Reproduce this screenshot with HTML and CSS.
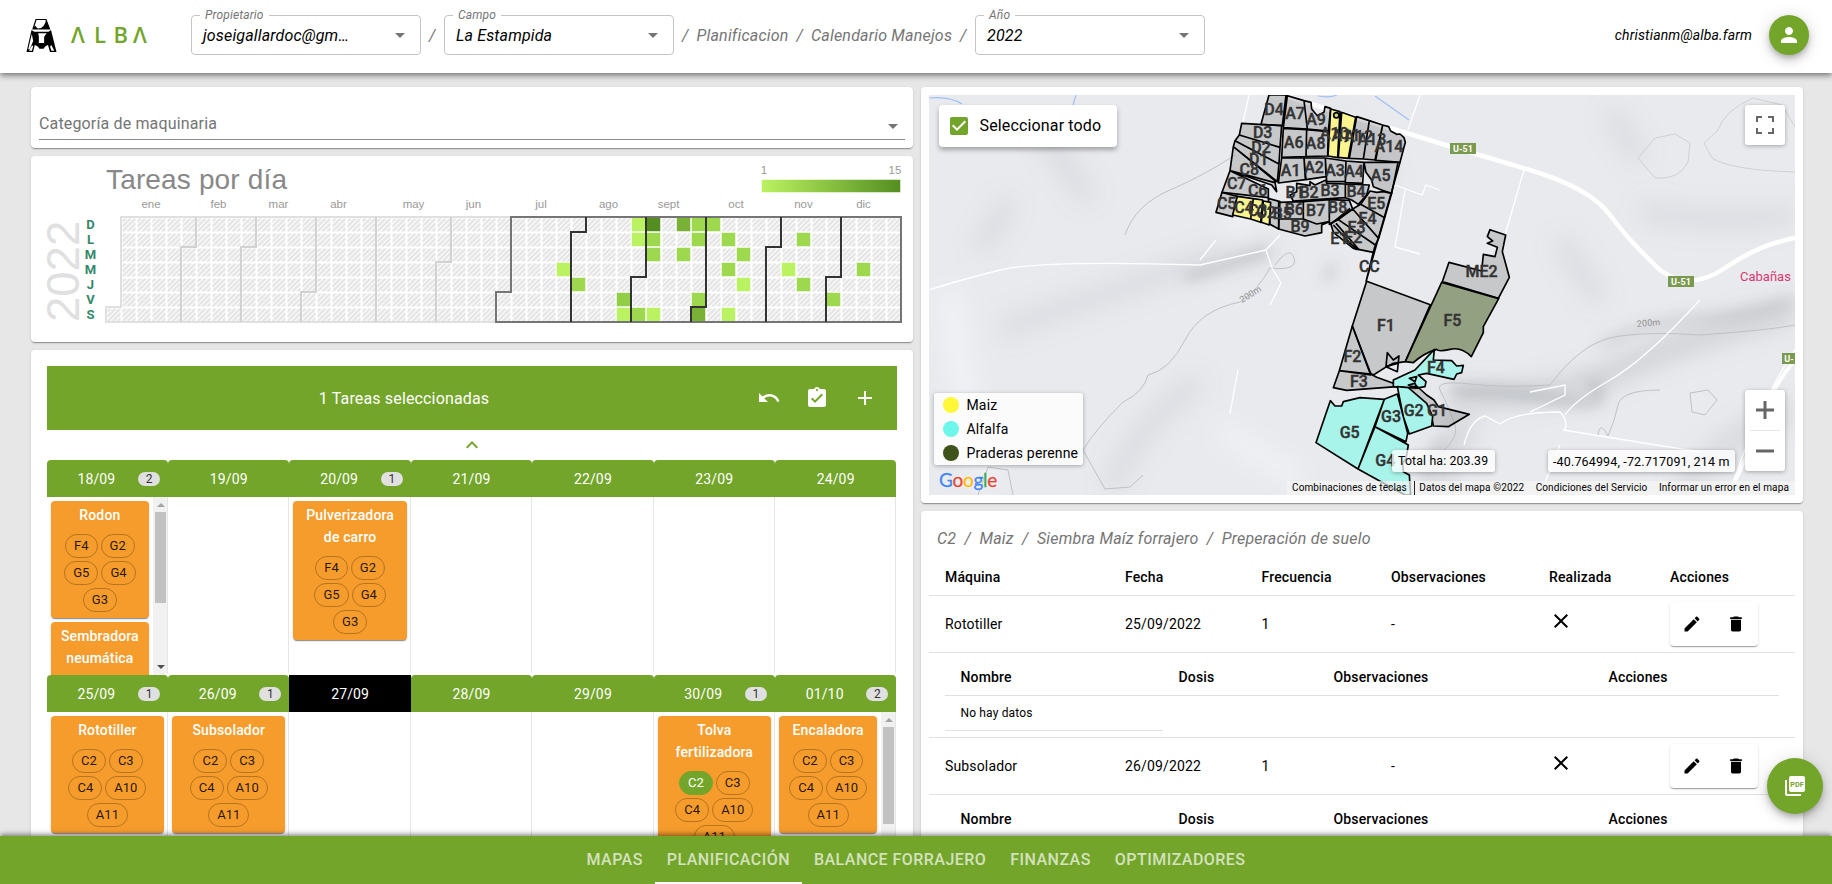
FILE: index.html
```html
<!DOCTYPE html>
<html lang="es">
<head>
<meta charset="utf-8">
<title>Alba - Calendario Manejos</title>
<link rel="stylesheet" href="styles.css">
</head>
<body>
<svg class="defs" aria-hidden="true">
  <symbol id="i-drop" viewBox="0 0 24 24"><path d="M7 10l5 5 5-5z"/></symbol>
  <symbol id="i-edit" viewBox="0 0 24 24"><path d="M3 17.25V21h3.75L17.81 9.94l-3.75-3.75L3 17.25zM20.71 7.04c.39-.39.39-1.02 0-1.41l-2.34-2.34c-.39-.39-1.02-.39-1.41 0l-1.83 1.83 3.75 3.75 1.83-1.83z"/></symbol>
  <symbol id="i-delete" viewBox="0 0 24 24"><path d="M6 19c0 1.1.9 2 2 2h8c1.1 0 2-.9 2-2V7H6v12zM19 4h-3.5l-1-1h-5l-1 1H5v2h14V4z"/></symbol>
  <symbol id="i-close" viewBox="0 0 24 24"><path d="M19 6.41L17.59 5 12 10.59 6.41 5 5 6.41 10.59 12 5 17.59 6.41 19 12 13.41 17.59 19 19 17.59 13.41 12z"/></symbol>
</svg>

<header class="appbar">
  <svg class="logo" width="130" height="40" viewBox="0 0 130 40">
    <path d="M11 4.500h10l3.500 9.500H8z" fill="#fff" stroke="#000" stroke-width="1.200"/>
    <path d="M21 5l3.500 9H13q7-1.500 8-9zM8 14l2-3.500 3 3.500z" fill="#000"/>
    <path d="M6.500 15L1.500 37H8l1.800-7 3.200 1.500V22l-3.500-5zM26 15l5.500 22H25l-2-7-3.200 1.500V22l3.500-5z" fill="#000"/>
    <path d="M6.800 19L3.200 34.500l1.600-.5L8.200 26zM26.300 30l3 5.800h-2.800l-1.500-4zM7 30.500l1.200.6-1.300 4.600H4z" fill="#fff"/>
    <path d="M10 17.500h13l-3.200 4.500v9l-1.600 2h-3.400l-1.600-2v-9z" fill="#fff" stroke="#000" stroke-width="1.300"/>
    <path d="M13.500 28h6v3l-1.500 2h-3l-1.500-2zM10 17.500h3l1 5z" fill="#000"/>
    <text class="logo-text" y="28" x="46 69 88.500 108">ΛLBΛ</text>
  </svg>
  <div class="crumbs">
    <div class="select"><span class="select-label">Propietario</span><span class="select-value">joseigallardoc@gm…</span><svg class="ic drop"><use href="#i-drop"/></svg></div>
    <span class="sep">/</span>
    <div class="select"><span class="select-label">Campo</span><span class="select-value">La Estampida</span><svg class="ic drop"><use href="#i-drop"/></svg></div>
    <span class="sep">/</span><span>Planificacion</span><span class="sep">/</span><span>Calendario Manejos</span><span class="sep">/</span>
    <div class="select"><span class="select-label">Año</span><span class="select-value">2022</span><svg class="ic drop"><use href="#i-drop"/></svg></div>
  </div>
  <div class="user">christianm@alba.farm</div>
  <div class="avatar"><svg class="ic" viewBox="0 0 24 24"><path d="M12 12c2.210 0 4-1.790 4-4s-1.790-4-4-4-4 1.790-4 4 1.790 4 4 4zm0 2c-2.670 0-8 1.340-8 4v2h16v-2c0-2.660-5.330-4-8-4z"/></svg></div>
</header>

<main class="page">
  <section class="column">
    <div class="card category">
      <div class="field"><span>Categoría de maquinaria</span><svg class="ic drop"><use href="#i-drop"/></svg></div>
    </div>

    <div class="card heat">
      <svg width="882" height="186" viewBox="31 156 882 186">
        <defs>
          <pattern id="hatch" x="106.500" y="217.500" width="15" height="15" patternUnits="userSpaceOnUse">
            <rect width="15" height="15" fill="#f8f8f8"/>
            <path d="M0 5L5 0M0 10L10 0M0 15L15 0M5 15L15 5M10 15L15 10" stroke="#dadada" stroke-width="1.300"/>
            <path d="M0 0H15V15H0Z" fill="none" stroke="#fff" stroke-width="2"/>
          </pattern>
          <linearGradient id="scale"><stop offset="0" stop-color="#bbf261"/><stop offset="1" stop-color="#548e20"/></linearGradient>
        </defs>
        <text class="heat-title" x="106" y="189" textLength="181">Tareas por día</text>
        <text class="heat-year" transform="translate(78.500 322) rotate(-90)">2022</text>
        <g class="heat-text" text-anchor="middle">
          <text x="764" y="174">1</text><text x="895" y="174">15</text>
          <text x="151" y="208">ene</text><text x="218.500" y="208">feb</text><text x="278.500" y="208">mar</text><text x="338.500" y="208">abr</text><text x="413.500" y="208">may</text><text x="473.500" y="208">jun</text><text x="541" y="208">jul</text><text x="608.500" y="208">ago</text><text x="668.500" y="208">sept</text><text x="736" y="208">oct</text><text x="803.500" y="208">nov</text><text x="863.500" y="208">dic</text>
        </g>
        <g class="heat-days" text-anchor="middle">
          <text x="90.500" y="229">D</text><text x="90.500" y="244">L</text><text x="90.500" y="259">M</text><text x="90.500" y="274">M</text><text x="90.500" y="289">J</text><text x="90.500" y="304">V</text><text x="90.500" y="319">S</text>
        </g>
        <rect x="761.500" y="179.500" width="139" height="13" fill="url(#scale)" stroke="#fff" stroke-opacity=".5"/>
        <path d="M121 217H901V322H106V307H121Z" fill="url(#hatch)"/>
        <g class="cells" transform="translate(106.500 217.500)">
          <g fill="#bbf261">
            <rect x="450" y="45" width="14" height="14"/><rect x="510" y="90" width="14" height="14"/><rect x="525" y="0" width="14" height="14"/><rect x="525" y="15" width="14" height="14"/><rect x="540" y="90" width="14" height="14"/><rect x="615" y="90" width="14" height="14"/><rect x="630" y="60" width="14" height="14"/><rect x="675" y="45" width="14" height="14"/>
          </g>
          <g fill="#9dd84f">
            <rect x="465" y="60" width="14" height="14"/><rect x="510" y="75" width="14" height="14" fill="#92cd48"/><rect x="525" y="90" width="14" height="14"/><rect x="540" y="15" width="14" height="14"/><rect x="540" y="30" width="14" height="14"/><rect x="570" y="30" width="14" height="14"/><rect x="585" y="0" width="14" height="14"/><rect x="585" y="15" width="14" height="14"/><rect x="585" y="75" width="14" height="14"/><rect x="600" y="0" width="14" height="14"/><rect x="615" y="15" width="14" height="14"/><rect x="615" y="45" width="14" height="14"/><rect x="630" y="30" width="14" height="14"/><rect x="690" y="15" width="14" height="14"/><rect x="690" y="60" width="14" height="14"/><rect x="720" y="75" width="14" height="14"/><rect x="750" y="45" width="14" height="14"/>
          </g>
          <rect x="540" y="0" width="14" height="14" fill="#548e20"/><rect x="570" y="0" width="14" height="14" fill="#78b136"/><rect x="585" y="90" width="14" height="14" fill="#78b136"/>
        </g>
        <g fill="none" stroke-width="2">
          <path stroke="#e0e0e0" d="M511 217H121V307H106V322H496"/>
          <path stroke="#d2d2d2" d="M196 217V247H181V322M256 217V247H241V322M316 217V292H301V322M376 217V322M451 217V262H436V322"/>
          <path stroke="#757575" d="M496 322V292H511V217H901V322H495"/>
          <path stroke="#333" d="M586 217V232H571V322M646 217V277H631V322M706 217V307H691V322M781 217V247H766V322M841 217V277H826V322"/>
        </g>
      </svg>
    </div>

    <div class="card planner">
      <div class="toolbar">
        <span class="toolbar-title">1 Tareas seleccionadas</span>
        <div class="tools">
          <svg class="ic" viewBox="0 0 24 24"><path d="M12.500 8c-2.650 0-5.050.99-6.900 2.600L2 7v9h9l-3.620-3.620c1.390-1.160 3.160-1.880 5.120-1.880 3.540 0 6.550 2.310 7.600 5.500l2.370-.78C21.080 11.030 17.150 8 12.500 8z"/></svg>
          <svg class="ic" viewBox="0 0 24 24"><path d="M19 3h-4.180C14.400 1.840 13.300 1 12 1c-1.300 0-2.400.84-2.820 2H5c-1.100 0-2 .9-2 2v14c0 1.100.9 2 2 2h14c1.100 0 2-.9 2-2V5c0-1.100-.9-2-2-2zm-7 0c.55 0 1 .45 1 1s-.45 1-1 1-1-.45-1-1 .45-1 1-1zm-2 14l-4-4 1.410-1.410L10 14.170l6.590-6.590L18 9l-8 8z"/></svg>
          <svg class="ic" viewBox="0 0 24 24"><path d="M19 13h-6v6h-2v-6H5v-2h6V5h2v6h6v2z"/></svg>
        </div>
      </div>
      <div class="collapse"><svg class="ic" viewBox="0 0 24 24"><path d="M12 8l-6 6 1.410 1.410L12 10.830l4.590 4.580L18 14z"/></svg></div>

      <div class="week">
        <div class="day"><div class="day-head"><span>18/09</span><b class="badge">2</b></div>
          <div class="day-body"><div class="tasks">
            <div class="task"><h4>Rodon</h4><div class="chips"><i>F4</i><i>G2</i><i>G5</i><i>G4</i><i>G3</i></div></div>
            <div class="task tall"><h4>Sembradora neumática</h4></div>
          </div><div class="scroll"><s class="up"></s><s class="thumb"></s><s class="down"></s></div></div></div>
        <div class="day"><div class="day-head"><span>19/09</span></div></div>
        <div class="day"><div class="day-head"><span>20/09</span><b class="badge">1</b></div>
          <div class="day-body"><div class="tasks"><div class="task"><h4>Pulverizadora de carro</h4><div class="chips"><i>F4</i><i>G2</i><i>G5</i><i>G4</i><i>G3</i></div></div></div></div></div>
        <div class="day"><div class="day-head"><span>21/09</span></div></div>
        <div class="day"><div class="day-head"><span>22/09</span></div></div>
        <div class="day"><div class="day-head"><span>23/09</span></div></div>
        <div class="day"><div class="day-head"><span>24/09</span></div></div>
      </div>
      <div class="week">
        <div class="day"><div class="day-head"><span>25/09</span><b class="badge">1</b></div>
          <div class="day-body"><div class="tasks"><div class="task"><h4>Rototiller</h4><div class="chips"><i>C2</i><i>C3</i><i>C4</i><i>A10</i><i>A11</i></div></div></div></div></div>
        <div class="day"><div class="day-head"><span>26/09</span><b class="badge">1</b></div>
          <div class="day-body"><div class="tasks"><div class="task"><h4>Subsolador</h4><div class="chips"><i>C2</i><i>C3</i><i>C4</i><i>A10</i><i>A11</i></div></div></div></div></div>
        <div class="day today"><div class="day-head"><span>27/09</span></div></div>
        <div class="day"><div class="day-head"><span>28/09</span></div></div>
        <div class="day"><div class="day-head"><span>29/09</span></div></div>
        <div class="day"><div class="day-head"><span>30/09</span><b class="badge">1</b></div>
          <div class="day-body"><div class="tasks"><div class="task"><h4>Tolva fertilizadora</h4><div class="chips"><i class="on">C2</i><i>C3</i><i>C4</i><i>A10</i><i>A11</i></div></div></div></div></div>
        <div class="day"><div class="day-head"><span>01/10</span><b class="badge">2</b></div>
          <div class="day-body"><div class="tasks">
            <div class="task"><h4>Encaladora</h4><div class="chips"><i>C2</i><i>C3</i><i>C4</i><i>A10</i><i>A11</i></div></div>
          </div><div class="scroll"><s class="up"></s><s class="thumb long"></s><s class="down"></s></div></div></div>
      </div>
    </div>
  </section>

  <section class="column">
    <div class="card map-card"><div class="map">
      <svg class="map-canvas" width="866" height="400" viewBox="929 95 866 400">
        <defs>
          <filter id="b6" x="-50%" y="-50%" width="200%" height="200%"><feGaussianBlur stdDeviation="7"/></filter>
          <filter id="b14" x="-50%" y="-50%" width="200%" height="200%"><feGaussianBlur stdDeviation="12"/></filter>
        </defs>
        <rect x="929" y="95" width="866" height="400" fill="#e9eaee"/>
        <g filter="url(#b14)" fill="none" stroke="#8d8f94" stroke-opacity=".18" stroke-width="18">
          <path d="M1000 330Q1090 300 1180 268T1270 262"/><path d="M950 290Q960 400 990 480" stroke="#fff" stroke-opacity=".5"/>
          <path d="M1110 490Q1140 420 1200 380M1040 130L1090 200M980 250L1010 200M1330 120L1390 180"/>
          <path d="M1640 210Q1700 225 1795 215M1610 110L1640 160M1560 240L1600 300"/>
          <path d="M1450 395Q1560 400 1620 370T1795 310" stroke-opacity=".35"/>
          <path d="M1440 490Q1450 440 1470 420" stroke-opacity=".3"/><path d="M1680 490Q1730 430 1795 410" stroke-opacity=".25"/>
          <path d="M1240 180V240M1220 430L1300 480" stroke="#fff" stroke-opacity=".4"/>
        </g>
        <g filter="url(#b6)" fill="none" stroke="#77797d" stroke-width="9">
          <path d="M1185 278Q1240 262 1268 250" stroke-opacity=".3"/><path d="M1452 391Q1500 388 1560 400T1590 380" stroke-opacity=".32"/>
          <path d="M1600 345Q1650 320 1700 318T1795 300" stroke-opacity=".22"/><path d="M1325 280L1335 265" stroke-opacity=".25"/>
          <path d="M1425 480Q1430 450 1445 440" stroke-opacity=".25"/>
        </g>
        <g fill="none" stroke="#c0c1c4" stroke-width="1">
          <path d="M1125 235Q1135 205 1170 190T1235 155"/>
          <path d="M1275 265Q1290 245 1294 258T1270 268Q1258 290 1240 302Q1200 310 1185 340T1148 375Q1144 392 1123 402Q1095 430 1083 450L1105 489 1130 487 1143 475"/>
          <path d="M1440 390Q1435 380 1470 384T1550 385Q1580 345 1610 338T1700 335Q1770 330 1795 325"/>
          <path d="M1440 390Q1450 410 1455 425T1432 460"/>
          <path d="M1795 127L1782 105 1753 98Q1725 110 1718 130L1704 143 1712 158Q1730 170 1795 172" stroke="#cfd0d3"/>
          <path d="M1638 158L1655 138 1675 134 1690 143 1688 162Q1680 180 1655 178Z" stroke="#cfd0d3"/>
          <path d="M1598 435Q1600 420 1608 436Q1615 420 1618 405T1660 390M1690 393L1692 412 1705 415 1717 400 1708 390ZM978 495L988 467 1008 470 1013 495"/>
        </g>
        <g fill="none" stroke="#9dc0f7" stroke-width="1.200">
          <path d="M929 98Q950 96 962 104M1073 105L1076 95M1318 96Q1330 98 1337 95M1375 96L1409 120"/>
        </g>
        <g fill="none" stroke="#fff" stroke-width="1.300">
          <path d="M1249 95L1243 122M1216 240L1200 260M1420 95L1408 130M1524 170L1505 235M1395 185L1422 195L1426 185L1440 190M1405 190L1395 247L1420 254"/>
          <path d="M1238 370L1230 413M929 290Q960 280 1000 270T1200 265L1266 250M1280 235L1266 250L1272 268L1281 283L1270 305"/>
          <path d="M1464 445Q1470 420 1485 416L1500 424Q1515 412 1560 412Q1568 420 1565 430M1565 415Q1575 400 1610 380T1700 300M1530 412L1565 395V385L1530 392"/>
          <path d="M1563 430L1700 452M1560 445L1540 495M1729 495Q1760 400 1795 350"/>
        </g>
        <path d="M1285 96L1449 146L1530 170Q1590 188 1610 215T1660 270Q1690 292 1725 268T1795 238" fill="none" stroke="#fff" stroke-width="4.500"/>
        <path d="M1795 360Q1765 395 1755 440L1728 495" fill="none" stroke="#fff" stroke-width="4"/>

        <!-- northern paddocks, drawn at three units per pixel -->
        <g class="plots" transform="translate(1200 85) scale(.33333)">
          <path d="M207 30H258L247 122 183 118ZM262 32L312 47 322 132 250 128ZM312 47L333 52 335 72 352 92 372 82 375 65 392 70 385 138 322 132Z"/>
          <path d="M470 95L508 107 490 222 448 220ZM508 107L548 120 525 225 490 222ZM548 120L566 125 572 138 590 148 600 147 612 158 616 172 600 232 527 226Z"/>
          <path d="M250 130L320 134 318 215 245 217ZM320 134L385 140 383 213 318 215Z"/>
          <path d="M125 115L245 122 240 187 118 150ZM118 150L240 187 237 237 105 167ZM105 167L237 237 232 290 100 185ZM100 185L228 290 222 292 90 257ZM90 257L215 300 230 320 225 292 212 290M90 257L66 322 205 338 205 312Z"/>
          <path d="M66 322L48 382 98 395 112 334ZM205 340L240 350 236 432 210 418Z"/>
          <path d="M245 219L312 219 316 284 235 294ZM312 219L376 219 378 275 318 284ZM376 219L438 228 436 290 380 290ZM438 228L492 232 488 295 436 293ZM492 232L594 232 575 325 560 320 545 315 520 305 515 285 498 262Z"/>
          <path d="M270 330L290 320V295L330 302V290L345 300 378 285 380 295 436 297 436 338 280 348ZM436 297L508 300 500 330 475 358 455 345 436 338Z"/>
          <path d="M236 352L310 350 310 402 236 402ZM310 350L388 344 388 410 350 417 310 402ZM388 344L448 346 458 372 388 418ZM236 402L310 402 350 417 388 410 365 420 365 443 315 453 236 432Z"/>
          <path d="M575 325L550 320 530 322 510 318 482 358 554 398ZM482 358L554 398 536 460 458 372ZM458 372L536 460 526 480 415 404ZM415 404L526 480 520 502 460 490 400 442 392 415Z"/>
          <path d="M400 420L470 495M408 415L478 495M440 468L475 494M450 370L392 418" class="line"/>
          <path class="corn" d="M392 72L420 80 413 218 384 213ZM425 82L467 97 445 220 415 217ZM112 334L160 341 152 402 98 390ZM160 341L188 345 182 412 152 402ZM190 348L212 352 208 420 184 412Z"/>
          <circle cx="409" cy="91" r="8"/>
          <path class="line" d="M600 232L498 590M520 502L498 590"/>
          <path d="M727 590L747 532 845 558 850 508 885 515 892 487 862 475 878 468 862 455 870 434 917 450 907 500 928 577 895 640Z"/>
        </g>
        <!-- southern paddocks -->
        <g class="plots" transform="translate(1280 220) scale(.33333)">
          <path d="M260 184L451 254 376 425 340 430 320 440 280 465 272 460 217 318Z"/>
          <path d="M217 318L272 465 178 452ZM178 452L272 462 290 472 340 490 350 500 200 511 160 503Z"/>
          <path d="M322 398L340 420 357 408 352 455 318 440ZM318 440L352 430" class="line"/>
          <path class="pasture" d="M485 187L656 236 610 320V338L574 410Q545 380 510 388T470 388Q430 400 400 428L376 425Z"/>
          <path class="alfalfa" d="M463 388L460 420 515 422 530 438 550 436 545 458 530 462 522 478 440 460 415 465 438 485 435 500 405 505 340 500V480L405 450Z"/>
          <path d="M385 503L410 498 440 525 462 540 475 560 568 583 505 620 460 618 455 590Z"/>
          <path class="alfalfa" d="M151 542L165 558 185 558 190 545 240 533 313 538 234 747 108 668ZM313 538L352 522 370 590 383 640 378 665 285 620ZM352 500L385 503 440 550 458 590 455 618 388 642 370 590ZM285 620L385 675 378 715 368 730 370 755 388 765 392 825H375L234 747Z"/>
          <path d="M388 475L410 470 405 485ZM385 495L405 490 412 505Z" class="line"/>
        </g>
        <g class="plot-labels" text-anchor="middle">
          <g transform="translate(1200 85) scale(.33333)">
            <text x="222" y="90">D4</text><text x="285" y="103">A7</text><text x="348" y="119">A9</text><text x="188" y="159">D3</text><text x="281" y="190">A6</text><text x="347" y="192">A8</text><text x="403" y="162">A10</text><text x="438" y="168">A11</text><text x="476" y="172">A12</text><text x="516" y="181">A13</text><text x="567" y="201">A14</text><text x="183" y="204">D2</text><text x="176" y="239">D1</text><text x="148" y="270">C8</text><text x="110" y="312">C7</text><text x="173" y="332">C6</text><text x="272" y="274">A1</text><text x="342" y="264">A2</text><text x="405" y="273">A3</text><text x="462" y="276">A4</text><text x="542" y="287">A5</text><text x="285" y="339">B1</text><text x="327" y="340">B2</text><text x="390" y="333">B3</text><text x="468" y="335">B4</text><text x="80" y="371">C5</text><text x="132" y="383">C4</text><text x="173" y="393">C3</text><text x="198" y="399">C2</text><text x="247" y="401">B5</text><text x="283" y="391">B6</text><text x="347" y="393">B7</text><text x="413" y="383">B8</text><text x="529" y="371">E5</text><text x="503" y="417">E4</text><text x="300" y="441">B9</text><text x="470" y="444">E3</text><text x="460" y="474">E2</text><text x="418" y="477">E1</text><text x="508" y="561">CC</text><text x="845" y="575">ME2</text>
          </g>
          <g transform="translate(1280 220) scale(.33333)">
            <text x="318" y="333">F1</text><text x="517" y="318">F5</text><text x="217" y="426">F2</text><text x="237" y="501">F3</text><text x="468" y="459">F4</text><text x="471" y="589">G1</text><text x="401" y="589">G2</text><text x="333" y="606">G3</text><text x="316" y="737">G4</text><text x="209" y="654">G5</text>
          </g>
        </g>
        <g class="road-sign" text-anchor="middle">
          <rect x="1450" y="143" width="26" height="11"/><text x="1463" y="152">U-51</text>
          <rect x="1668" y="276" width="26" height="11"/><text x="1681" y="285">U-51</text>
          <rect x="1782" y="353" width="30" height="11"/><text x="1789" y="362">U-</text>
        </g>
        <text class="contour" transform="translate(1242 303) rotate(-32)">200m</text>
        <text class="contour" transform="translate(1637 327) rotate(-5)">200m</text>
        <text class="place" x="1740" y="281">Cabañas</text>
      </svg>
      <div class="map-box select-all"><svg class="ic" viewBox="0 0 24 24"><path d="M19 3H5c-1.110 0-2 .9-2 2v14c0 1.100.89 2 2 2h14c1.110 0 2-.9 2-2V5c0-1.100-.89-2-2-2zm-9 14l-5-5 1.410-1.410L10 14.170l7.590-7.590L19 8l-9 9z"/></svg><span>Seleccionar todo</span></div>
      <div class="map-box full"><svg width="18" height="18" viewBox="0 0 18 18"><path d="M0 0v6h2V2h4V0zM16 0h-4v2h4v4h2V0zM16 16h-4v2h6v-6h-2zM2 12H0v6h6v-2H2z" fill="#666"/></svg></div>
      <div class="map-box legend">
        <div><s class="dot maiz"></s>Maiz</div><div><s class="dot alfa"></s>Alfalfa</div><div><s class="dot prad"></s>Praderas perenne</div>
      </div>
      <div class="google"><span>G</span><span>o</span><span>o</span><span>g</span><span>l</span><span>e</span></div>
      <div class="map-box total">Total ha: 203.39</div>
      <div class="map-box coords">-40.764994, -72.717091, 214 m</div>
      <div class="map-box zoomer"><svg width="40" height="81" viewBox="0 0 40 81"><path d="M18.500 11h3v7.500H29v3h-7.500V29h-3v-7.500H11v-3h7.500zM11 59.500h18v3H11z" fill="#666"/><path d="M5 40h30v1H5z" fill="#e6e6e6"/></svg></div>
      <div class="attrib"><span>Combinaciones de teclas</span><span class="bar">Datos del mapa ©2022</span><span>Condiciones del Servicio</span><span>Informar un error en el mapa</span></div>
    </div></div>

    <div class="card detail">
      <div class="path"><span>C2</span><span>/</span><span>Maiz</span><span>/</span><span>Siembra Maíz forrajero</span><span>/</span><span>Preperación de suelo</span></div>
      <div class="row head"><span>Máquina</span><span>Fecha</span><span>Frecuencia</span><span>Observaciones</span><span>Realizada</span><span>Acciones</span></div>
      <div class="row"><span>Rototiller</span><span>25/09/2022</span><span>1</span><span>-</span><span class="done"><svg class="ic"><use href="#i-close"/></svg></span><span><em class="actions"><svg><use href="#i-edit"/></svg><svg><use href="#i-delete"/></svg></em></span></div>
      <div class="nested">
        <div class="sub head"><span>Nombre</span><span>Dosis</span><span>Observaciones</span><span>Acciones</span></div>
        <div class="empty">No hay datos</div>
      </div>
      <div class="row"><span>Subsolador</span><span>26/09/2022</span><span>1</span><span>-</span><span class="done"><svg class="ic"><use href="#i-close"/></svg></span><span><em class="actions"><svg><use href="#i-edit"/></svg><svg><use href="#i-delete"/></svg></em></span></div>
      <div class="nested">
        <div class="sub head"><span>Nombre</span><span>Dosis</span><span>Observaciones</span><span>Acciones</span></div>
      </div>
    </div>
  </section>
</main>

<nav class="tabs"><a>Mapas</a><a class="active">Planificación</a><a>Balance forrajero</a><a>Finanzas</a><a>Optimizadores</a></nav>
<div class="fab"><svg width="24" height="24" viewBox="0 0 24 24"><path d="M4 6H2v14c0 1.100.9 2 2 2h14v-2H4z" fill="#fff"/><rect x="6" y="2" width="16" height="16" rx="2" fill="#fff"/><text x="14" y="12.500" text-anchor="middle">PDF</text></svg></div>
</body>
</html>
```

FILE: styles.css
```css
* { box-sizing: border-box; }
body { margin: 0; width: 1832px; height: 884px; overflow: hidden; display: flex; flex-direction: column; position: relative; background: #e7e7e7; font-family: Roboto, sans-serif; font-size: 14px; letter-spacing: .15px; color: #000; }
.defs { position: absolute; width: 0; height: 0; }
.ic { width: 24px; height: 24px; fill: currentColor; flex: none; display: block; }
.drop { color: #757575; }
i, em { font-style: normal; }
s { text-decoration: none; display: block; }

.appbar { height: 73px; flex: none; background: #fff; position: relative; z-index: 2; display: flex; align-items: center; padding: 0 23px 3px 25px; box-shadow: 0 2px 4px -1px rgba(0,0,0,.3), 0 4px 5px rgba(0,0,0,.18), 0 1px 10px rgba(0,0,0,.14); }
.logo { flex: none; margin-right: 36px; }
.logo-text { font-family: "Open Sans", sans-serif; font-size: 22px; font-weight: 600; fill: #73a52a; letter-spacing: 0; }
.crumbs { display: flex; align-items: center; font-size: 16px; font-style: italic; color: #757575; }
.crumbs .sep { margin: 0 8px; width: 7px; }
.crumbs > span:not(.sep) { letter-spacing: .2px; margin-left: -.5px; }
.select { width: 230px; height: 40px; border: 1px solid #c4c4c4; border-radius: 4px; position: relative; display: flex; align-items: center; justify-content: space-between; padding: 0 8px 0 11px; color: #000; }
.select-label { position: absolute; left: 8px; top: -8px; background: #fff; padding: 0 5px; font-size: 12px; line-height: 14px; color: #757575; }
.user { margin-left: auto; font-size: 14px; font-style: italic; }
.avatar { width: 40px; height: 40px; border-radius: 50%; background: #73a52a; color: #fff; margin-left: 17px; display: flex; align-items: center; justify-content: center; box-shadow: 0 3px 5px -1px rgba(0,0,0,.2), 0 6px 10px rgba(0,0,0,.14), 0 1px 18px rgba(0,0,0,.12); }

.page { flex: 1; min-height: 0; display: grid; grid-template-columns: 882px 882px; gap: 8px; padding: 14px 29px 0 31px; overflow: hidden; }
.column { display: flex; flex-direction: column; gap: 8px; min-height: 0; }
.card { background: #fff; border-radius: 4px; flex: none; box-shadow: 0 2px 1px -1px rgba(0,0,0,.2), 0 1px 1px rgba(0,0,0,.14), 0 1px 3px rgba(0,0,0,.12); }

.category { height: 61px; padding: 19px 8px 0; }
.field { height: 34px; border-bottom: 1px solid #8c8c8c; display: flex; align-items: center; justify-content: space-between; font-size: 16px; color: #757575; }
.field .drop { margin-top: 7px; }
.field span { margin-top: 1px; }

.heat { height: 186px; }
.heat svg { display: block; }
.heat text { font-family: "Liberation Sans", Arial, sans-serif; letter-spacing: 0; }
.heat .heat-title { font-size: 28px; fill: #888; }
.heat .heat-year { font-size: 45.500px; fill: #e0e0e0; }
.heat .heat-text text { font-size: 11.500px; fill: #999; }
.heat .heat-days text { font-family: Roboto, sans-serif; font-size: 13px; font-weight: 700; fill: #36876a; }
.cells rect { stroke: #fff; stroke-opacity: .5; }

.planner { height: 560px; padding: 16px 16px 0; }
.toolbar { height: 64px; background: #73a52a; color: #fff; display: flex; align-items: center; padding: 0 20px; font-size: 16px; }
.toolbar-title { flex: 1; text-align: center; padding-right: 16px; }
.tools { display: flex; gap: 24px; }
.collapse { height: 30px; display: flex; justify-content: center; align-items: center; color: #73a52a; }
.week { width: 849.660px; height: 215px; margin-left: -.3px; display: grid; grid-template-columns: repeat(7, 1fr); overflow: hidden; }
.day { background: #fff; border-radius: 4px; overflow: hidden; display: flex; flex-direction: column; min-height: 0; min-width: 0; position: relative; }
.day::after { content: ""; position: absolute; right: 0; top: 37px; bottom: 0; width: 1px; background: #e6e6e6; }
.day-head { height: 37px; flex: none; background: #73a52a; color: #fff; display: flex; align-items: center; padding-right: 8px; }
.day-head span { flex: 1; text-align: center; padding-left: 8px; }
.today .day-head { background: #000; }
.today { border-radius: 0; }
.badge { width: 22px; height: 14px; border-radius: 7px; background: #e0e0e0; color: #333; font-size: 12px; font-weight: 400; line-height: 14px; text-align: center; }
.day-body { flex: 1; min-height: 0; display: flex; overflow: hidden; }
.tasks { flex: 1; min-width: 0; padding: 4px 4px 0; display: flex; flex-direction: column; gap: 4px; }
.task { background: #f69c2c; border-radius: 4px; padding: 3px 8px 6px; flex: none; box-shadow: 0 2px 1px -1px rgba(0,0,0,.3), 0 1px 1px rgba(0,0,0,.14), 0 1px 3px rgba(0,0,0,.12); }
.task.tall { height: 139px; }
.task h4 { margin: 0 0 8px; font-size: 14px; font-weight: 500; line-height: 22px; color: #fff; text-align: center; }
.chips { display: flex; flex-wrap: wrap; justify-content: center; gap: 3px; }
.chips i { height: 24px; border: 1px solid rgba(0,0,0,.26); border-radius: 12px; padding: 0 8px; font-size: 13px; line-height: 22px; color: rgba(0,0,0,.87); letter-spacing: 0; }
.chips .on { background: #73a52a; border-color: #73a52a; color: #fff; }
.scroll { width: 15px; background: #f1f1f1; display: flex; flex-direction: column; align-items: center; flex: none; }
.up { width: 0; height: 0; border: 4px solid transparent; border-top: 0; border-bottom-color: #a3a3a3; margin-top: 6px; }
.down { width: 0; height: 0; border: 4px solid transparent; border-bottom: 0; border-top-color: #505050; margin: auto 0 6px; }
.thumb { width: 11px; height: 91px; background: #c1c1c1; margin-top: 5px; }
.thumb.long { height: 97px; }

.map-card { height: 416px; padding: 8px; }
.map { width: 866px; height: 400px; position: relative; overflow: hidden; }
.map-canvas { display: block; }
.plots path, .plots circle { fill: rgba(128,128,128,.32); stroke: #000; stroke-width: 5; stroke-linejoin: round; }
.plots .corn { fill: #faf491; }
.plots .pasture { fill: #94a082; }
.plots .alfalfa { fill: #a9f4ea; }
.plots .line { fill: none; }
.plot-labels text { font-size: 48px; font-weight: 500; fill: #333; stroke: #333; stroke-width: 1.200; letter-spacing: 0; }
.road-sign rect { fill: #7a9a4f; }
.road-sign text { font-size: 9px; font-weight: 700; fill: #fff; letter-spacing: 0; }
.contour { font-size: 9px; fill: #909090; }
.place { font-size: 13px; fill: #d8386f; letter-spacing: 0; }
.map-box { position: absolute; background: #fff; border-radius: 3px; box-shadow: 0 1px 4px rgba(0,0,0,.3); display: flex; align-items: center; }
.select-all { left: 10px; top: 10px; width: 178px; height: 42px; border-radius: 4px; padding-left: 8px; gap: 8.500px; font-size: 16px; box-shadow: 0 3px 5px rgba(0,0,0,.3); }
.select-all span { padding-bottom: 2px; }
.select-all .ic { color: #73a52a; }
.full { left: 816px; top: 10px; width: 40px; height: 40px; justify-content: center; }
.legend { left: 5px; top: 298px; width: 149px; height: 72px; flex-direction: column; align-items: stretch; padding-left: 9px; background: rgba(255,255,255,.8); }
.legend div { height: 24px; display: flex; align-items: center; gap: 7.500px; white-space: nowrap; }
.dot { width: 16px; height: 16px; border-radius: 50%; }
.maiz { background: #fff838; }
.alfa { background: #6cf7ea; }
.prad { background: #40521b; }
.google { position: absolute; left: 10px; top: 373px; font-family: Lato, sans-serif; font-size: 19px; line-height: 24px; letter-spacing: -.3px; color: #4285f4; -webkit-text-stroke: .3px currentColor; text-shadow: 0 0 2px #fff; }
.google span:nth-child(2), .google span:nth-child(6) { color: #ea4335; }
.google span:nth-child(3) { color: #fbbc05; }
.google span:nth-child(5) { color: #34a853; }
.total, .coords { top: 355px; height: 22px; background: rgba(255,255,255,.75); font-size: 12.500px; white-space: nowrap; }
.total { left: 463px; width: 103px; padding-left: 6px; font-size: 12.300px; }
.coords { left: 619px; width: 187px; padding-left: 5px; }
.zoomer { left: 816px; top: 295px; width: 40px; height: 81px; }
.attrib { position: absolute; right: 0; top: 386px; height: 14px; width: 508px; background: rgba(245,245,245,.7); font-size: 10px; line-height: 14px; letter-spacing: .12px; display: flex; justify-content: space-between; padding: 0 6px 0 5px; white-space: nowrap; }
.attrib .bar { border-left: 1px solid #222; padding-left: 4px; margin-left: -4px; }

.detail { height: 400px; padding: 8px; }
.path { display: flex; gap: 8.300px; padding: 7px 7px 0 8px; height: 39px; line-height: 26px; font-size: 16px; font-style: italic; letter-spacing: .2px; color: #757575; }
.row { height: 57px; border-bottom: 1px solid #e0e0e0; display: grid; grid-template-columns: 180px 136.500px 129.500px 158px 121px 1fr; align-items: center; padding-left: 16px; }
.row.head { height: 38px; }
.head span { font-weight: 500; }
.done svg { margin-top: -7px; }
.actions { width: 88px; height: 44px; border-radius: 4px; display: flex; justify-content: space-around; align-items: center; box-shadow: 0 2px 1px -1px rgba(0,0,0,.2), 0 1px 1px rgba(0,0,0,.14), 0 1px 3px rgba(0,0,0,.12); }
.actions svg { width: 20px; height: 20px; }
.nested { height: 85px; padding: 6px 16px 0; border-bottom: 1px solid #e0e0e0; }
.sub { height: 37px; border-bottom: 1px solid #e0e0e0; display: grid; grid-template-columns: 218px 155px 275px 1fr; align-items: center; padding-left: 15.500px; }
.empty { width: 218px; height: 35px; border-bottom: 1px solid #e0e0e0; padding-left: 15.500px; line-height: 34px; font-size: 12px; }

.tabs { height: 48px; flex: none; background: #73a52a; position: relative; z-index: 2; display: flex; justify-content: center; box-shadow: 0 -2px 4px -1px rgba(0,0,0,.3), 0 -2px 6px rgba(0,0,0,.25); }
.tabs a { padding: 0 12px; line-height: 48px; font-size: 16px; font-weight: 500; letter-spacing: .46px; text-transform: uppercase; color: rgba(255,255,255,.7); }
.tabs .active { border-bottom: 2px solid #fff; }
.fab { position: absolute; z-index: 3; left: 1767px; top: 758px; width: 56px; height: 56px; border-radius: 50%; background: #73a52a; display: flex; align-items: center; justify-content: center; box-shadow: 0 3px 5px -1px rgba(0,0,0,.2), 0 6px 10px rgba(0,0,0,.14), 0 1px 18px rgba(0,0,0,.12); }
.fab text { font-size: 7.300px; font-weight: 700; fill: #73a52a; letter-spacing: 0; }
```
